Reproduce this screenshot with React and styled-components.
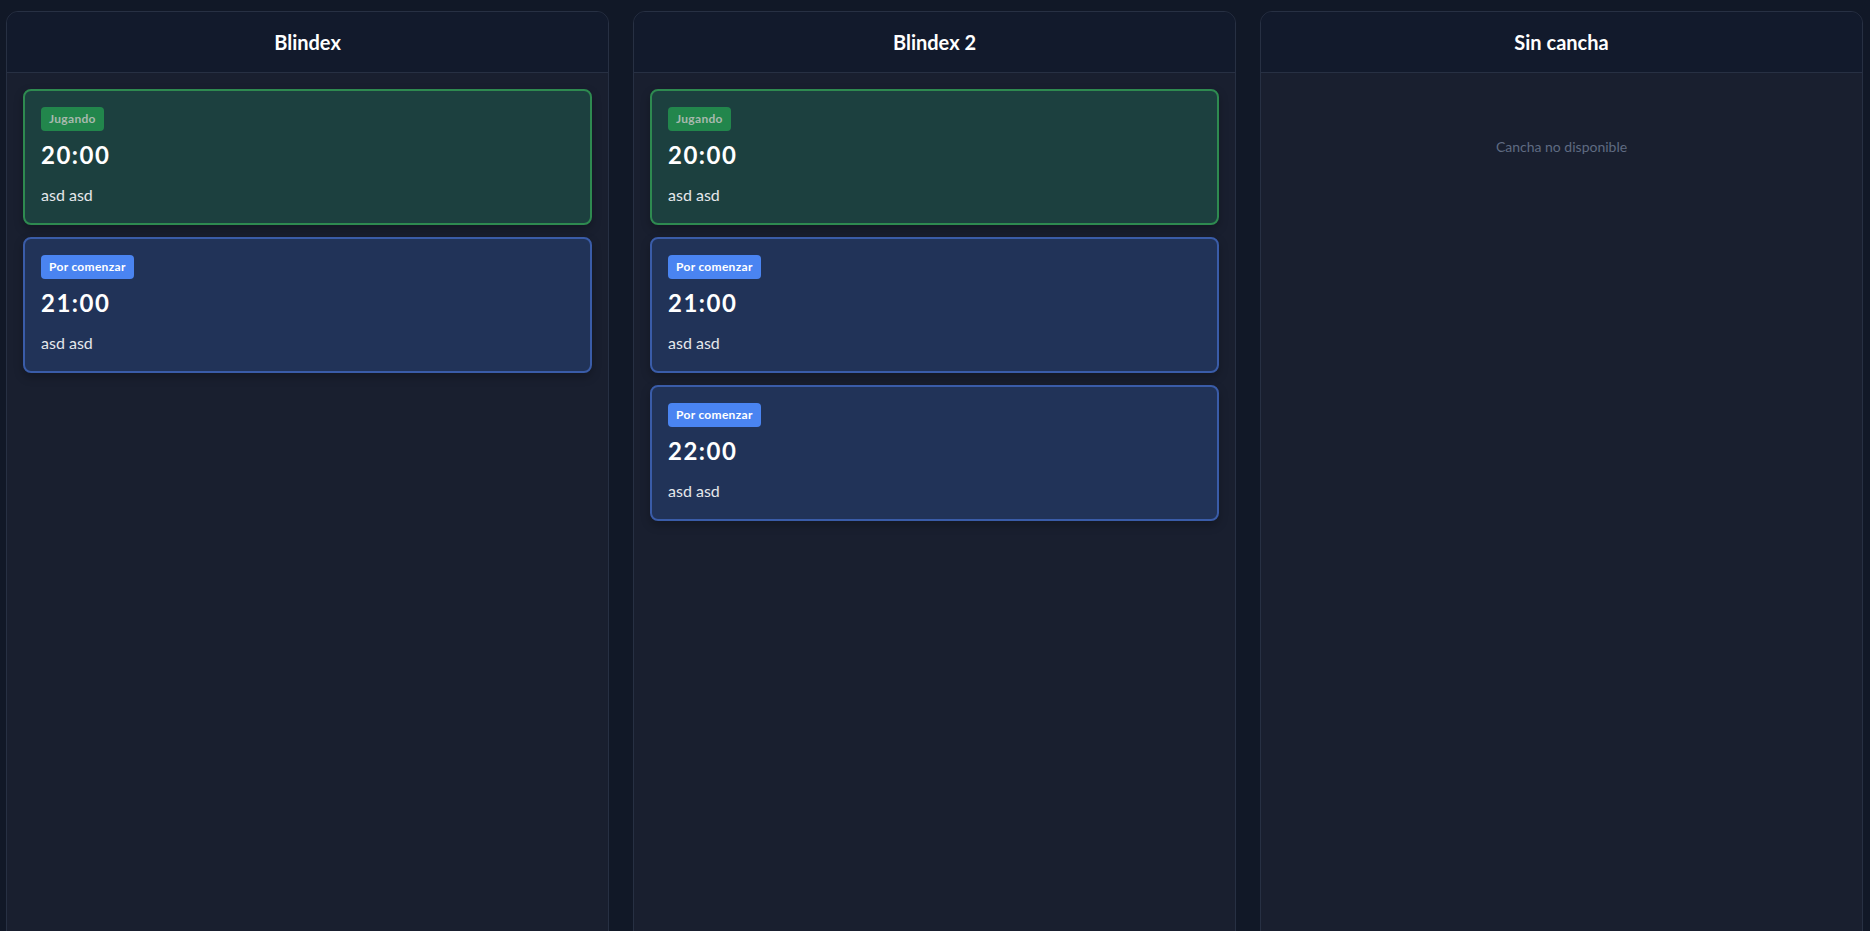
import React from "react";
import styled, { createGlobalStyle } from "styled-components";

const GlobalStyle = createGlobalStyle`
  html, body {
    margin: 0;
    padding: 0;
    background: #111827;
    overflow: hidden;
  }
  body {
    font-family: "Lato", "Noto Sans", sans-serif;
    color: #f9fafb;
  }
  * { box-sizing: border-box; }
`;

const Board = styled.main`
  display: grid;
  grid-template-columns: repeat(3, 1fr);
  gap: 24px;
  padding: 11px 7px 0 6px;
  min-height: 100vh;
  background: #111827;
`;

const Column = styled.section`
  display: flex;
  flex-direction: column;
  min-height: calc(100vh + 40px);
  background: #191f2f;
  border: 1px solid #273043;
  border-radius: 12px;
  overflow: hidden;
`;

const ColumnHeader = styled.header`
  padding: 16px;
  background: #121a2c;
  border-bottom: 1px solid #273043;
  text-align: center;
`;

const ColumnTitle = styled.h2`
  margin: 0;
  font-size: 20px;
  line-height: 28px;
  font-weight: 700;
  color: #ffffff;
`;

const ColumnBody = styled.div`
  display: flex;
  flex-direction: column;
  gap: 12px;
  padding: 16px;
`;

const variants = {
  playing: {
    bg: "#1c403f",
    border: "#2e8a50",
    badgeBg: "#22864c",
    badgeColor: "#a8b9ae",
  },
  upcoming: {
    bg: "#213358",
    border: "#3a5ca8",
    badgeBg: "#4a84f1",
    badgeColor: "#ffffff",
  },
};

const Card = styled.article`
  padding: 16px;
  border-radius: 8px;
  border: 2px solid ${(p) => variants[p.$status].border};
  background: ${(p) => variants[p.$status].bg};
  box-shadow: 0 4px 10px rgba(0, 0, 0, 0.25);
`;

const Badge = styled.span`
  display: inline-block;
  padding: 4px 8px;
  border-radius: 4px;
  font-size: 12px;
  line-height: 16px;
  font-weight: 700;
  letter-spacing: 0.3px;
  background: ${(p) => variants[p.$status].badgeBg};
  color: ${(p) => variants[p.$status].badgeColor};
`;

const Time = styled.div`
  margin: 8px 0 12px;
  font-size: 24px;
  line-height: 32px;
  font-weight: 700;
  letter-spacing: 1.5px;
  color: #ffffff;
`;

const Players = styled.div`
  font-size: 16px;
  line-height: 24px;
  color: #e5e7eb;
`;

const Empty = styled.p`
  margin: 0;
  padding: 48px 0;
  text-align: center;
  font-size: 14px;
  line-height: 20px;
  color: #5f6b82;
`;

const labels = { playing: "Jugando", upcoming: "Por comenzar" };

const courts = [
  {
    name: "Blindex",
    matches: [
      { status: "playing", time: "20:00", players: "asd asd" },
      { status: "upcoming", time: "21:00", players: "asd asd" },
    ],
  },
  {
    name: "Blindex 2",
    matches: [
      { status: "playing", time: "20:00", players: "asd asd" },
      { status: "upcoming", time: "21:00", players: "asd asd" },
      { status: "upcoming", time: "22:00", players: "asd asd" },
    ],
  },
  { name: "Sin cancha", matches: [] },
];

export default function App() {
  return (
    <>
      <GlobalStyle />
      <Board>
        {courts.map((court) => (
          <Column key={court.name}>
            <ColumnHeader>
              <ColumnTitle>{court.name}</ColumnTitle>
            </ColumnHeader>
            <ColumnBody>
              {court.matches.length === 0 ? (
                <Empty>Cancha no disponible</Empty>
              ) : (
                court.matches.map((m, i) => (
                  <Card key={i} $status={m.status}>
                    <Badge $status={m.status}>{labels[m.status]}</Badge>
                    <Time>{m.time}</Time>
                    <Players>{m.players}</Players>
                  </Card>
                ))
              )}
            </ColumnBody>
          </Column>
        ))}
      </Board>
    </>
  );
}
